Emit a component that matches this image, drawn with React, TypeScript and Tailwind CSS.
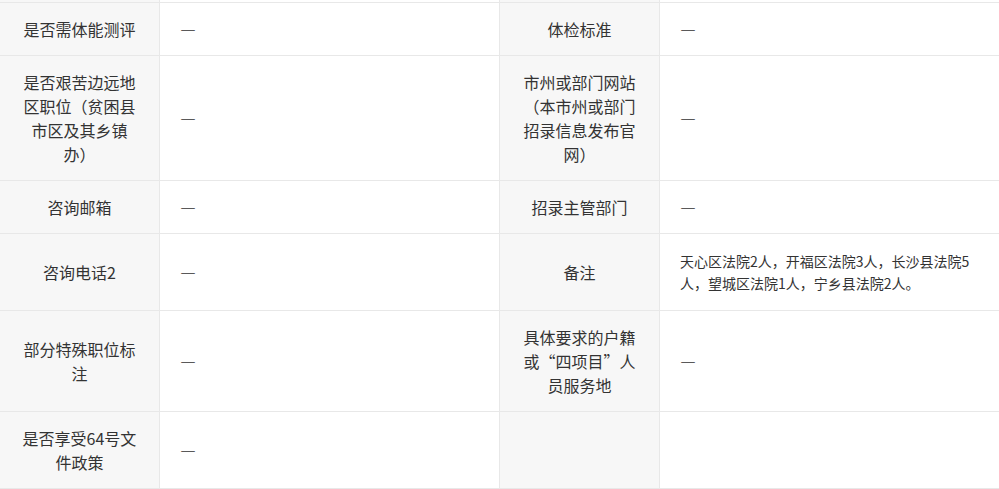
import type { FC } from "react";

type Cell = { text?: string; label?: boolean; small?: boolean };

const font = { fontFamily: '"Noto Sans CJK SC", "Noto Sans", sans-serif' };

// each row: [label, value, label, value]
const rows: Cell[][] = [
  [{ label: true }, {}, { label: true }, {}],
  [
    { label: true, text: "是否需体能测评" },
    { text: "—" },
    { label: true, text: "体检标准" },
    { text: "—" },
  ],
  [
    { label: true, text: "是否艰苦边远地区职位（贫困县市区及其乡镇办）" },
    { text: "—" },
    { label: true, text: "市州或部门网站（本市州或部门招录信息发布官网）" },
    { text: "—" },
  ],
  [
    { label: true, text: "咨询邮箱" },
    { text: "—" },
    { label: true, text: "招录主管部门" },
    { text: "—" },
  ],
  [
    { label: true, text: "咨询电话2" },
    { text: "—" },
    { label: true, text: "备注" },
    {
      small: true,
      text: "天心区法院2人，开福区法院3人，长沙县法院5人，望城区法院1人，宁乡县法院2人。",
    },
  ],
  [
    { label: true, text: "部分特殊职位标注" },
    { text: "—" },
    { label: true, text: "具体要求的户籍或“四项目”人员服务地" },
    { text: "—" },
  ],
  [
    { label: true, text: "是否享受64号文件政策" },
    { text: "—" },
    { label: true },
    {},
  ],
];

const App: FC = () => {
  return (
    <div
      className="w-[999px] h-[489px] overflow-hidden bg-white [text-spacing-trim:space-all]"
      style={font}
    >
      <div className="grid grid-cols-[160px_340px_160px_339px] grid-rows-[3px_53px_125px_53px_77px_101px_77px] text-[#333]">
        {rows.map((row, r) =>
          row.map((cell, c) => (
            <div
              key={`${r}-${c}`}
              className={`flex items-center border-b border-[#e8e8e8] overflow-hidden ${
                c < 3 ? "border-r" : ""
              } ${
                cell.label
                  ? "bg-[#f7f7f7] justify-center text-center px-[17px] text-[16px] leading-[24px]"
                  : cell.small
                  ? "px-5 text-[14px] leading-[22px]"
                  : "px-5 text-[16px] leading-[24px] [font-feature-settings:'fwid']"
              }`}
            >
              {cell.text && <span>{cell.text}</span>}
            </div>
          ))
        )}
      </div>
    </div>
  );
};

export default App;
